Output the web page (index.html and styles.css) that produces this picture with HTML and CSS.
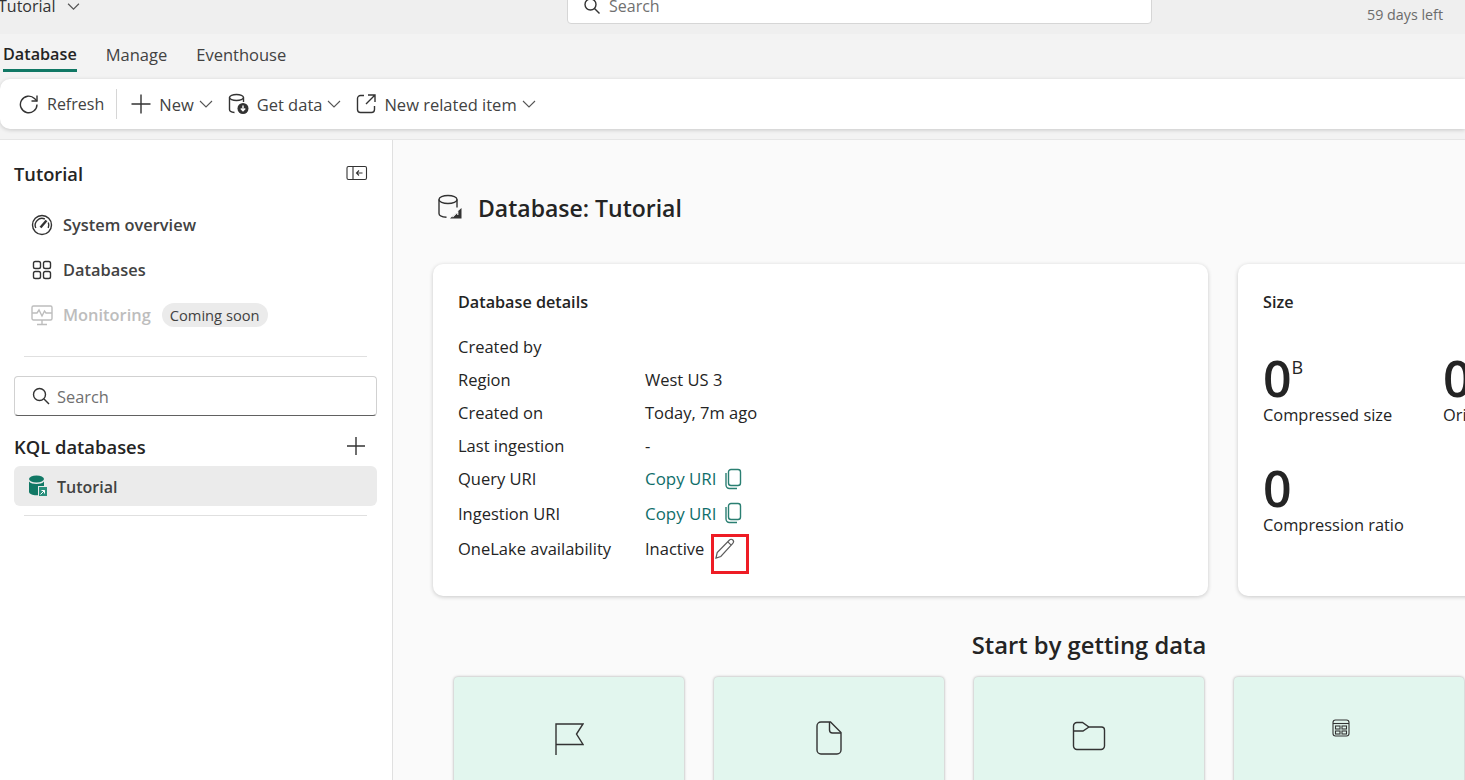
FILE: index.html
```html
<!DOCTYPE html>
<html lang="en">
  <head>
    <meta charset="UTF-8" />
    <title>Tutorial - Database</title>
    <link rel="stylesheet" href="styles.css">
  </head>
  <body>
    <header class="topbar">
      <div class="workspace">
        <span>Tutorial</span>
        <svg class="chev" width="13" height="13" viewBox="0 0 12 12"><path d="M1 3.500l5 5 5-5" /></svg>
      </div>
      <div class="top-search">
        <svg class="line-icon" width="18" height="18" viewBox="0 0 18 18"><circle cx="7.500" cy="7.500" r="5.500" /><path d="M11.500 11.500l5 5" /></svg>
        <span>Search</span>
      </div>
      <div class="trial">59 days left</div>
    </header>

    <nav class="tabs">
      <a class="tab active">Database</a>
      <a class="tab">Manage</a>
      <a class="tab">Eventhouse</a>
    </nav>

    <div class="toolbar">
      <button class="tool">
        <svg class="line-icon" width="20" height="20" viewBox="0 0 20 20"><path d="M18 10.500a8.300 8.300 0 1 1-2.500-6L18 7" /><path d="M18 1.500V7h-5.500" /></svg>
        Refresh
      </button>
      <span class="tool-sep"></span>
      <button class="tool">
        <svg class="line-icon" width="20" height="20" viewBox="0 0 20 20"><path d="M10 .5v19M.5 10h19" /></svg>
        New
        <svg class="chev" width="14" height="14" viewBox="0 0 14 14"><path d="M1 4l6 6 6-6" /></svg>
      </button>
      <button class="tool">
        <svg class="line-icon" width="21" height="22" viewBox="0 0 21 22"><ellipse cx="8.500" cy="4.500" rx="7" ry="3" /><path d="M1.500 4.500v12c0 1.700 2.200 2.800 5 3M15.500 4.500V9" /><circle cx="15" cy="15.500" r="5.500" fill="#333" stroke="none" /><path d="M15 12.500v5M12.800 15.500l2.200 2.200 2.200-2.200" stroke="#fff" /></svg>
        Get data
        <svg class="chev" width="14" height="14" viewBox="0 0 14 14"><path d="M1 4l6 6 6-6" /></svg>
      </button>
      <button class="tool">
        <svg class="line-icon" width="20" height="20" viewBox="0 0 20 20"><path d="M8 1.500H4.500a3 3 0 0 0-3 3v11a3 3 0 0 0 3 3h11a3 3 0 0 0 3-3V12" /><path d="M12 1h7v7M18.500 1.500L10 10" /></svg>
        New related item
        <svg class="chev" width="14" height="14" viewBox="0 0 14 14"><path d="M1 4l6 6 6-6" /></svg>
      </button>
    </div>

    <div class="workspace-body">
      <aside class="sidebar">
        <div class="side-head">
          <h2>Tutorial</h2>
          <svg class="line-icon thin collapse" width="22" height="16" viewBox="0 0 22 16"><rect x="1" y="1.500" width="19.500" height="13" rx="1.500" /><path d="M7 1.500v13M16.500 8H10.500M13 5.500L10.500 8l2.500 2.500" /></svg>
        </div>

        <ul class="side-nav">
          <li>
            <svg class="line-icon" width="22" height="22" viewBox="0 0 22 22"><circle cx="11" cy="11" r="9.500" /><path d="M4.800 14a6.800 6.800 0 0 1 9-9M17.300 8.500a6.800 6.800 0 0 1-.1 5.500" /><path d="M9.500 13.500L15.500 6.500" stroke-width="2.400" /></svg>
            <span>System overview</span>
          </li>
          <li>
            <svg class="line-icon" width="22" height="22" viewBox="0 0 22 22"><rect x="2.500" y="2.500" width="7" height="7" rx="1.800" /><rect x="12.500" y="2.500" width="7" height="7" rx="1.800" /><rect x="2.500" y="12.500" width="7" height="7" rx="1.800" /><rect x="12.500" y="12.500" width="7" height="7" rx="1.800" /></svg>
            <span>Databases</span>
          </li>
          <li class="disabled">
            <svg class="line-icon" width="22" height="22" viewBox="0 0 22 22"><rect x="1" y="2" width="20" height="14" rx="1.500" /><path d="M1 9h5l2-3 3 6 2.500-5 1.500 2h6M11 16v4M6 20.500h10" /></svg>
            <span>Monitoring</span>
            <em class="pill">Coming soon</em>
          </li>
        </ul>

        <hr class="side-rule" />

        <div class="side-search">
          <svg class="line-icon" width="18" height="18" viewBox="0 0 18 18"><circle cx="7.500" cy="7.500" r="6" /><path d="M12 12l5 5" /></svg>
          <span>Search</span>
        </div>

        <div class="kql-head">
          <h3>KQL databases</h3>
          <svg class="line-icon" width="20" height="20" viewBox="0 0 20 20"><path d="M10 1v18M1 10h18" /></svg>
        </div>

        <div class="kql-item">
          <svg width="20" height="22" viewBox="0 0 20 22"><ellipse cx="8.500" cy="4" rx="7.500" ry="3.500" fill="#117865" /><path d="M1 6.500c1.500 1.800 4.500 2.500 7.500 2.500s6-.7 7.500-2.500V11h-6v9.200c-.5.100-1 .1-1.500.1-4 0-7.500-1.300-7.500-3.500z" fill="#117865" /><rect x="11" y="12" width="8" height="9" fill="#2a8f7c" /><path d="M12.500 19.500l4-4M13.500 15.500h3v3" stroke="#fff" fill="none" /></svg>
          <span>Tutorial</span>
        </div>

        <hr class="side-rule tight" />
      </aside>

      <main class="content">
        <div class="page-title">
          <svg class="line-icon" width="26" height="26" viewBox="0 0 26 26"><ellipse cx="11" cy="5.500" rx="9" ry="4" /><path d="M2 5.500v14c0 2 3 3.500 7.500 3.800M20 5.500v8" /><path d="M24.500 14v10.500H13z" fill="#333" stroke="none" /><path d="M15.500 23l5-5M17.500 17.800h3.300v3.300" stroke="#fff" stroke-width="1.100" /></svg>
          <h1>Database: Tutorial</h1>
        </div>

        <div class="cards">
          <section class="card details">
            <h4>Database details</h4>
            <dl class="detail-list">
              <dt>Created by</dt><dd></dd>
              <dt>Region</dt><dd>West US 3</dd>
              <dt>Created on</dt><dd>Today, 7m ago</dd>
              <dt>Last ingestion</dt><dd>-</dd>
              <dt>Query URI</dt>
              <dd><a class="copy">Copy URI</a>
                <svg class="copy-icon" width="18" height="22" viewBox="0 0 18 22"><rect x="4.500" y="1.500" width="12" height="16" rx="2.500" /><path d="M2 5v12a3.500 3.500 0 0 0 3.500 3.500H13" /></svg>
              </dd>
              <dt>Ingestion URI</dt>
              <dd><a class="copy">Copy URI</a>
                <svg class="copy-icon" width="18" height="22" viewBox="0 0 18 22"><rect x="4.500" y="1.500" width="12" height="16" rx="2.500" /><path d="M2 5v12a3.500 3.500 0 0 0 3.500 3.500H13" /></svg>
              </dd>
              <dt>OneLake availability</dt>
              <dd>Inactive
                <span class="edit-box">
                  <svg class="line-icon pencil" width="22" height="22" viewBox="0 0 22 22"><path d="M2 21l1.200-5.500L15.500 3a2.300 2.300 0 0 1 3.300 3.300L6.800 19.500z" /><path d="M13.800 4.800l3.400 3.400" /></svg>
                </span>
              </dd>
            </dl>
          </section>

          <section class="card size">
            <h4>Size</h4>
            <div class="metrics">
              <div class="metric"><b>0<sup>B</sup></b><span>Compressed size</span></div>
              <div class="metric"><b>0</b><span>Original size</span></div>
              <div class="metric"><b>0</b><span>Compression ratio</span></div>
            </div>
          </section>
        </div>

        <section class="start">
          <h2>Start by getting data</h2>
          <div class="tiles">
            <div class="tile">
              <svg class="line-icon" width="30" height="34" viewBox="0 0 30 34"><path d="M2 34V3h27l-6.500 10 6.500 10.500H2" /></svg>
            </div>
            <div class="tile">
              <svg class="line-icon" width="26" height="34" viewBox="0 0 26 34"><path d="M5 1h9.500L25 11.500V29a4 4 0 0 1-4 4H5a4 4 0 0 1-4-4V5a4 4 0 0 1 4-4z" /><path d="M13.500 1v8a3 3 0 0 0 3 3H25" /></svg>
            </div>
            <div class="tile">
              <svg class="line-icon" width="34" height="32" viewBox="0 0 34 32"><path d="M1.500 5a3.500 3.500 0 0 1 3.500-3.500h5.500L17 6h12.500a3 3 0 0 1 3 3v16a3.500 3.500 0 0 1-3.500 3.500H5A3.500 3.500 0 0 1 1.500 25z" /><path d="M1.500 10H11l6-4" /></svg>
            </div>
            <div class="tile">
              <svg class="line-icon thin report" width="18" height="18" viewBox="0 0 18 18"><rect x="1" y="1" width="16" height="16" rx="2.500" /><path d="M1 4.500h16" /><rect x="3.500" y="7" width="4.500" height="3" /><rect x="10" y="7" width="4.500" height="3" /><rect x="3.500" y="12" width="4.500" height="3" /><rect x="10" y="12" width="4.500" height="3" /></svg>
            </div>
          </div>
        </section>
      </main>
    </div>
  </body>
</html>
```

FILE: styles.css
```css
* {
  box-sizing: border-box;
  margin: 0;
  padding: 0;
  font-family: "Open Sans", "Noto Sans", sans-serif;
}

html,
body {
  height: 780px;
  overflow: hidden;
}

body {
  background: #f3f3f3;
  color: #242424;
  display: flex;
  flex-direction: column;
}

.line-icon {
  fill: none;
  stroke: #333;
  stroke-width: 1.4;
  flex-shrink: 0;
}

.line-icon.thin {
  stroke-width: 1.1;
}

.chev {
  fill: none;
  stroke: #555;
  stroke-width: 1.1;
  flex-shrink: 0;
}

/* top bar is cut off by the screenshot */
.topbar {
  height: 34px;
  background: #efefef;
  position: relative;
  flex-shrink: 0;
  overflow: hidden;
}

.workspace {
  display: flex;
  align-items: center;
  gap: 12px;
  margin-left: -2px;
  margin-top: -5px;
  font-size: 16px;
  color: #333;
  height: 22px;
}

.top-search {
  position: absolute;
  left: 567px;
  top: -12px;
  width: 585px;
  height: 36px;
  background: #fff;
  border: 1px solid #d6d6d6;
  border-radius: 4px;
  display: flex;
  align-items: center;
  gap: 8px;
  padding-left: 15px;
  font-size: 16px;
  color: #707070;
}

.trial {
  position: absolute;
  right: 22px;
  top: 5px;
  font-size: 14.300px;
  color: #6b6b6b;
}

.tabs {
  height: 45px;
  display: flex;
  gap: 29px;
  padding-left: 3px;
  align-items: flex-start;
  flex-shrink: 0;
}

.tab {
  font-size: 16.500px;
  color: #424242;
  padding-top: 9px;
  height: 38px;
}

.tab.active {
  font-size: 16.200px;
  font-weight: 600;
  color: #242424;
  border-bottom: 3px solid #117865;
}

.toolbar {
  height: 50px;
  background: #fff;
  border-radius: 10px 0 0 10px;
  box-shadow: 0 1px 4px rgba(0, 0, 0, 0.18);
  display: flex;
  align-items: center;
  padding-left: 19px;
  flex-shrink: 0;
  position: relative;
}

.tool {
  display: flex;
  align-items: center;
  gap: 8px;
  border: none;
  background: none;
  font-size: 16.500px;
  color: #424242;
  margin-right: 15px;
}

.tool:first-child {
  font-size: 16px;
}

.tool .chev {
  margin-left: -3px;
}

.tool-sep {
  width: 1px;
  height: 30px;
  background: #d6d6d6;
  margin: 0 14px 0 -3px;
}

.workspace-body {
  margin-top: 10px;
  flex: 1;
  display: flex;
  min-height: 0;
  border-top: 1px solid #e6e6e6;
}

.sidebar {
  width: 393px;
  flex-shrink: 0;
  background: #fff;
  border-right: 1px solid #e0e0e0;
  padding: 0 15px 0 14px;
}

.side-head {
  display: flex;
  justify-content: space-between;
  align-items: center;
  height: 38px;
  margin-top: 15px;
  padding-right: 9px;
}

.side-head h2 {
  font-size: 18.300px;
  font-weight: 600;
  margin-top: -2px;
}

.collapse {
  margin-top: -2px;
}

.side-nav {
  list-style: none;
  padding-left: 17px;
  margin-top: 9px;
}

.side-nav li {
  display: flex;
  align-items: center;
  gap: 10px;
  height: 45px;
  font-size: 16.400px;
  font-weight: 600;
  color: #424242;
}

.side-nav .disabled {
  color: #bdbdbd;
}

.side-nav .disabled .line-icon {
  stroke: #bdbdbd;
}

.pill {
  font-style: normal;
  font-size: 14.700px;
  font-weight: 500;
  background: #ebebeb;
  color: #424242;
  border-radius: 13px;
  padding: 2px 8px;
  margin-left: 1px;
}

.side-rule {
  border: none;
  border-top: 1px solid #e0e0e0;
  margin: 19px 10px 19px 10px;
}

.side-rule.tight {
  margin-top: 9px;
}

.side-search {
  height: 40px;
  border: 1px solid #d1d1d1;
  border-bottom-color: #616161;
  border-radius: 4px;
  display: flex;
  align-items: center;
  gap: 7px;
  padding-left: 17px;
  font-size: 16.400px;
  color: #707070;
}

.kql-head {
  display: flex;
  justify-content: space-between;
  align-items: center;
  height: 50px;
  padding: 10px 11px 0 0;
}

.kql-head h3 {
  font-size: 18.400px;
  font-weight: 600;
}

.kql-item {
  height: 40px;
  background: #ebebeb;
  border-radius: 6px;
  display: flex;
  align-items: center;
  gap: 9px;
  padding-left: 14px;
  font-size: 16px;
  font-weight: 600;
  color: #424242;
}

.kql-item span {
  margin-top: 1px;
}

.content {
  flex: 1;
  min-width: 0;
  background: #fafafa;
  padding: 0 0 0 40px;
  overflow: hidden;
}

.page-title {
  display: flex;
  align-items: center;
  gap: 15px;
  height: 40px;
  margin-top: 48px;
  margin-left: 4px;
}

.page-title svg {
  margin-top: -2px;
}

.page-title h1 {
  font-size: 23px;
  font-weight: 600;
}

.cards {
  display: flex;
  gap: 30px;
  margin-top: 36px;
  width: 1300px;
}

.card {
  background: #fff;
  border-radius: 10px;
  box-shadow: 0 1px 4px rgba(0, 0, 0, 0.2);
  height: 332px;
  padding: 27px 25px;
}

.card h4 {
  font-size: 16.200px;
  font-weight: 600;
}

.details {
  width: 775px;
  flex-shrink: 0;
}

.size {
  flex: 1;
}

.detail-list {
  display: grid;
  grid-template-columns: 187px 1fr;
  grid-template-rows: repeat(5, 33px) 36px 35px;
  margin-top: 17px;
  font-size: 16.500px;
  align-items: center;
}

.detail-list dd {
  display: flex;
  align-items: center;
  gap: 8px;
}

.copy {
  color: #0f6e6a;
  font-size: 16.900px;
}

.copy-icon {
  fill: none;
  stroke: #2a7f72;
  stroke-width: 1.4;
}

.edit-box {
  border: 3px solid #ee1c25;
  width: 38px;
  height: 40px;
  margin: 10px 0 0 -1px;
  display: flex;
}

.pencil {
  stroke: #5c5c5c;
  stroke-width: 1.2;
}

.metrics {
  display: grid;
  grid-template-columns: 180px 180px;
  margin-top: 40px;
  row-gap: 37px;
}

.metric b {
  display: block;
  font-size: 50px;
  font-weight: 600;
  line-height: 51px;
  color: #242424;
}

.metric sup {
  font-size: 18px;
  font-weight: 500;
  vertical-align: 23px;
  line-height: 0;
}

.metric span {
  display: block;
  margin-top: -1px;
  font-size: 16.400px;
  white-space: nowrap;
}

.start {
  width: 1312px;
  margin-top: 33px;
}

.start h2 {
  font-size: 23.800px;
  font-weight: 600;
  text-align: center;
}

.tiles {
  display: flex;
  gap: 30px;
  margin-top: 16px;
  padding-left: 21px;
}

.tile {
  width: 230px;
  height: 200px;
  flex-shrink: 0;
  background: #e2f6ee;
  border-radius: 4px;
  box-shadow: 0 0 3px rgba(0, 0, 0, 0.35);
  display: flex;
  justify-content: center;
  padding-top: 44px;
}

.report {
  margin: -2px 16px 0 0;
}
```
